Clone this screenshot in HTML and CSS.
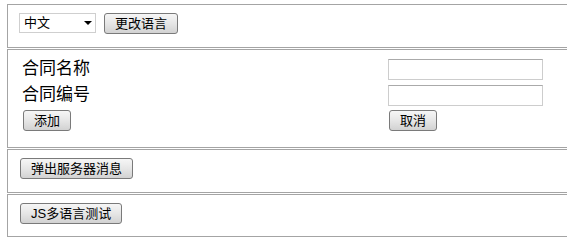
FILE: index.html
```html
<!DOCTYPE html>
<html lang="zh-CN">
<head>
<meta charset="utf-8">
<title>多语言测试</title>
<link rel="stylesheet" href="styles.css">
</head>
<body>
<div class="page">
  <div class="section s1">
    <span class="select-wrap">
      <select class="lang-select">
        <option>中文</option>
        <option>English</option>
      </select>
    </span>
    <button class="btn">更改语言</button>
  </div>
  <div class="section s2">
    <div class="form-grid">
      <label class="label">合同名称</label>
      <input class="text-input" type="text">
      <label class="label">合同编号</label>
      <input class="text-input" type="text">
      <div class="cell"><button class="btn btn-add">添加</button></div>
      <div class="cell"><button class="btn btn-cancel">取消</button></div>
    </div>
  </div>
  <div class="section s3">
    <button class="btn">弹出服务器消息</button>
  </div>
  <div class="section s4">
    <button class="btn">JS多语言测试</button>
  </div>
</div>
</body>
</html>
```
FILE: styles.css
```css
html, body {
  margin: 0;
  padding: 0;
  background: #ffffff;
}

body {
  font-family: "Liberation Sans", "Noto Sans CJK SC", sans-serif;
  color: #000;
  overflow: hidden;
}

.page {
  padding: 4px 0 0 7px;
  display: flex;
  flex-direction: column;
  gap: 1px;
}

.section {
  border: 1px solid #a4a4a4;
  border-right: none;
  box-sizing: content-box;
}

.s1 {
  height: 34px;
  padding: 8px 0 0 11px;
  display: flex;
  align-items: flex-start;
  gap: 8px;
}

.s2 {
  height: 91px;
  padding: 6px 0 0 13px;
}

.s3 {
  height: 34px;
  padding: 8px 0 0 12px;
}

.s4 {
  height: 33px;
  padding: 8px 0 0 12px;
}

.select-wrap {
  position: relative;
  display: inline-block;
  width: 77px;
  height: 20px;
  margin-top: 0;
}

.lang-select {
  -webkit-appearance: none;
  appearance: none;
  width: 77px;
  height: 20px;
  box-sizing: border-box;
  border: 1px solid #cfcfcf;
  border-radius: 0;
  background: #fff;
  font-family: "Liberation Sans", "Noto Sans CJK SC", sans-serif;
  font-size: 13px;
  line-height: 18px;
  padding: 0 0 0 4px;
  margin: 0;
  color: #000;
}

.select-wrap::after {
  content: "";
  position: absolute;
  left: 65px;
  top: 8px;
  width: 0;
  height: 0;
  border-left: 4px solid transparent;
  border-right: 4px solid transparent;
  border-top: 4px solid #000;
  pointer-events: none;
}

.btn {
  height: 21px;
  box-sizing: border-box;
  padding: 0 10px;
  margin: 0;
  border: 1px solid #7a7a7a;
  border-radius: 3px;
  background: linear-gradient(#f6f6f6, #e6e6e6 50%, #d2d2d2);
  font-family: "Liberation Sans", "Noto Sans CJK SC", sans-serif;
  font-size: 13px;
  line-height: 19px;
  color: #000;
}

.form-grid {
  display: grid;
  grid-template-columns: 367px 155px;
  grid-template-rows: 26px 26px 24px;
  align-items: center;
}

.label {
  font-size: 17px;
  line-height: 26px;
  height: 26px;
  padding-left: 1px;
}

.text-input {
  width: 155px;
  height: 21px;
  box-sizing: border-box;
  border: 1px solid #cdcdcd;
  border-top-color: #aaaaaa;
  margin: 0;
  padding: 0 2px;
  background: #fff;
}

.cell {
  display: flex;
  align-items: center;
  height: 24px;
}

.btn-add {
  margin-left: 2px;
}

.btn-cancel {
  margin-left: 1px;
}
```
